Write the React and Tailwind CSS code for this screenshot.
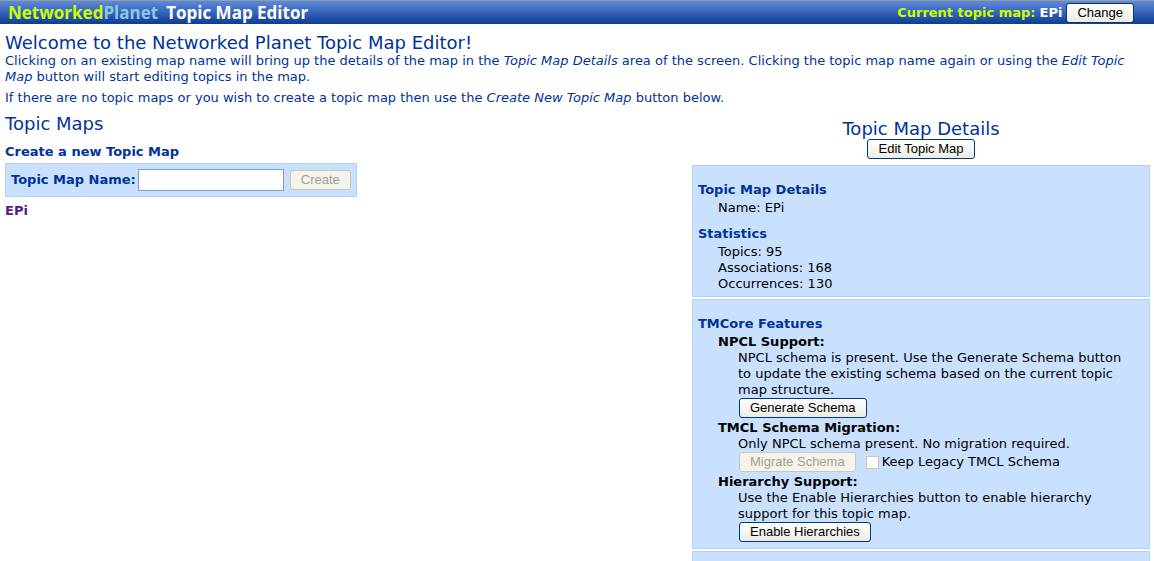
import React from 'react';

function Button({ children, className = '', ...rest }) {
  return (
    <button
      type="button"
      className={`h-5 shrink-0 rounded-[3px] border border-[#003c74] bg-linear-to-b from-white to-[#ecebe5] px-[10px] font-['Liberation_Sans',Arial,sans-serif] text-[13px] leading-[18px] whitespace-nowrap text-black disabled:border-[#c9c7ba] disabled:bg-none disabled:bg-[#f5f4ea] disabled:text-[#a1a192] ${className}`}
      {...rest}
    >
      {children}
    </button>
  );
}

function Panel({ title, children, className = 'pt-4 pb-1' }) {
  return (
    <section className={`border border-[#b5d0f5] bg-[#cae0ff] px-[5px] ${className}`}>
      {title && <h3 className="mb-[2px] font-bold text-[#003399]">{title}</h3>}
      {children}
    </section>
  );
}

function Feature({ title, text, children }) {
  return (
    <div className="pl-5">
      <h4 className="font-bold">{title}</h4>
      <div className="pr-3 pl-5">
        <p>{text}</p>
        <div className="flex items-center pb-[2px] pl-px">{children}</div>
      </div>
    </div>
  );
}

export default function App() {
  return (
    <div className="flex min-h-screen flex-col bg-white font-['DejaVu_Sans',Verdana,sans-serif] text-[13px] leading-4 text-black">
      <header className="flex h-6 items-center justify-between border-t border-[#9c9c94] bg-linear-to-b from-[#5c8ade] to-[#0d3d94] pr-5 pl-2">
        <div className="flex items-center gap-2 font-['Open_Sans',sans-serif] text-[17px] leading-5 font-bold whitespace-nowrap text-white">
          <span className="text-[#ccff00]">
            Networked<span className="text-[#8cc8e0]">Planet</span>
          </span>
          <h1>Topic Map Editor</h1>
        </div>
        <div className="flex items-center gap-1 font-bold text-white">
          <span className="text-[#ccff00]">Current topic map:</span>
          <span>EPi</span>
          <Button className="font-normal">Change</Button>
        </div>
      </header>

      <main className="flex flex-1 flex-col pt-[9px] pr-1 pl-[5px]">
        <div className="text-[#003399]">
          <h2 className="text-lg leading-5">Welcome to the Networked Planet Topic Map Editor!</h2>
          <p className="mb-[5px]">
            Clicking on an existing map name will bring up the details of the map in the <i>Topic Map Details</i> area of
            the screen. Clicking the topic map name again or using the <i>Edit Topic Map</i> button will start editing
            topics in the map.
          </p>
          <p>
            If there are no topic maps or you wish to create a topic map then use the <i>Create New Topic Map</i> button
            below.
          </p>
        </div>

        <div className="flex flex-1 justify-between pt-2">
          <div className="text-[#003399]">
            <h2 className="text-lg leading-5">Topic Maps</h2>
            <h3 className="mt-[10px] mb-[3px] font-bold">Create a new Topic Map</h3>
            <form className="flex h-[34px] items-center border border-[#b5d0f5] bg-[#cae0ff] px-[5px]">
              <label htmlFor="map-name" className="font-bold whitespace-nowrap">
                Topic Map Name:
              </label>
              <input
                id="map-name"
                type="text"
                className="ml-[2px] h-[22px] w-[146px] border border-[#7f9db9] bg-white px-1 text-black"
              />
              <Button disabled className="ml-[6px]">
                Create
              </Button>
            </form>
            <a href="#epi" className="mt-[6px] inline-block font-bold text-[#551a8b]">
              EPi
            </a>
          </div>

          <div className="flex w-2/5 flex-col pt-[5px]">
            <div className="mb-[6px] flex flex-col items-center">
              <h2 className="text-lg leading-5 text-[#003399]">Topic Map Details</h2>
              <Button>Edit Topic Map</Button>
            </div>
            <div className="flex flex-1 flex-col gap-[2px]">
              <Panel title="Topic Map Details">
                <p className="pl-5">Name: EPi</p>
                <h3 className="mt-[10px] mb-[2px] font-bold text-[#003399]">Statistics</h3>
                <ul className="pl-5">
                  <li>Topics: 95</li>
                  <li>Associations: 168</li>
                  <li>Occurrences: 130</li>
                </ul>
              </Panel>
              <Panel title="TMCore Features">
                <Feature
                  title="NPCL Support:"
                  text="NPCL schema is present. Use the Generate Schema button to update the existing schema based on the current topic map structure."
                >
                  <Button>Generate Schema</Button>
                </Feature>
                <Feature title="TMCL Schema Migration:" text="Only NPCL schema present. No migration required.">
                  <Button disabled>Migrate Schema</Button>
                  <input
                    id="keep-legacy"
                    type="checkbox"
                    disabled
                    className="ml-[10px] size-[13px] appearance-none border border-[#c9c7ba] bg-white"
                  />
                  <label htmlFor="keep-legacy" className="ml-[3px]">
                    Keep Legacy TMCL Schema
                  </label>
                </Feature>
                <Feature
                  title="Hierarchy Support:"
                  text="Use the Enable Hierarchies button to enable hierarchy support for this topic map."
                >
                  <Button>Enable Hierarchies</Button>
                </Feature>
              </Panel>
              <Panel className="flex-1 border-b-0" />
            </div>
          </div>
        </div>
      </main>
    </div>
  );
}
